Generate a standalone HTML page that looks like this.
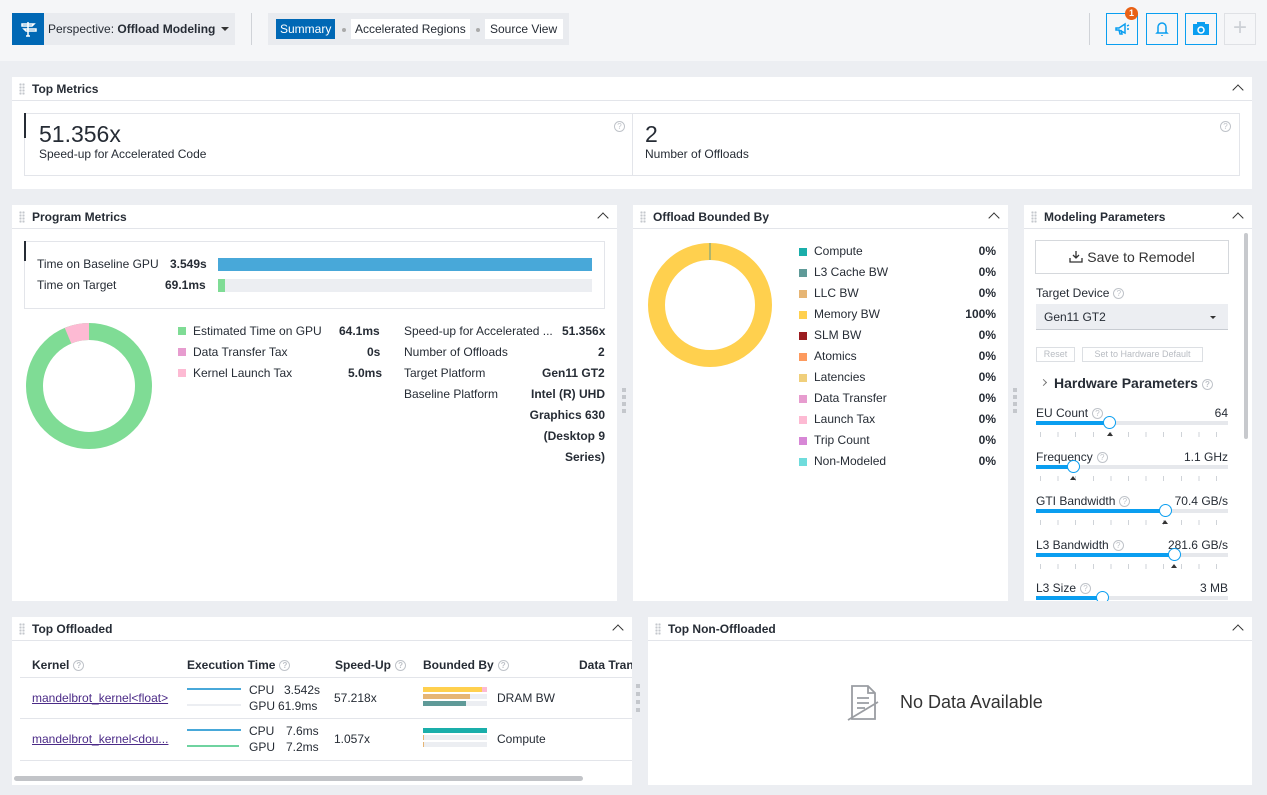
<!DOCTYPE html>
<html><head><meta charset="utf-8"><style>
*{box-sizing:border-box;margin:0;padding:0}
body{width:1267px;height:795px;background:#eceef2;font-family:"Liberation Sans",sans-serif;font-size:12px;color:#262c35;position:relative;overflow:hidden}
.a{position:absolute;white-space:nowrap}
.hdr{left:0;top:0;width:1267px;height:61px;background:#f5f6f8}
.panel{position:absolute;background:#fff}
.ph{position:absolute;left:0;right:0;top:0;height:24px;border-bottom:1px solid #e3e5ea}
.ph .t{position:absolute;left:20px;top:5px;font-weight:bold;font-size:12px;color:#262c35}
.grip{position:absolute;left:7px;top:6px;width:6px;height:12px;background:radial-gradient(circle,#c4c7cc 1px,transparent 1.3px) 0 0/3px 3px}
.chev{position:absolute;right:10px;top:9px;width:8px;height:8px;border-left:1.5px solid #333;border-top:1.5px solid #333;transform:rotate(45deg)}
.q{display:inline-block;width:11px;height:11px;border:1px solid #bfc3c9;border-radius:50%;color:#bfc3c9;font-size:8px;line-height:9px;text-align:center;vertical-align:middle;margin-left:4px}
.sq{position:absolute;width:8px;height:8px}
.r{text-align:right}
.b{font-weight:bold}
.slider{position:absolute;left:12px;width:192px;height:4px;background:#e6e8ec}
.slider i{position:absolute;left:0;top:0;height:4px;background:#0a9ef0}
.slider b{position:absolute;top:-5px;width:13px;height:13px;border:1.5px solid #0a9ef0;border-radius:50%;background:#fff}
.ticks{position:absolute;left:16px;width:188px;height:5px;background:repeating-linear-gradient(90deg,#cfd3d8 0 1px,transparent 1px 17.6px)}
</style></head><body>
<div class="a hdr"></div>
<div class="a" style="left:12px;top:13px;width:32px;height:32px;background:#0068b5"></div>
<svg class="a" style="left:19px;top:20px" width="18" height="18" viewBox="0 0 18 18" fill="none" stroke="#fff" stroke-width="1.5"><path d="M3 4h12l-2 2H3zM5 9h12v2H7zM9 2v14M7 16h4"/></svg>
<div class="a" style="left:44px;top:13px;width:191px;height:32px;background:#e9ebef"></div>
<div class="a" style="left:48px;top:22px;font-size:12px">Perspective: <b>Offload Modeling</b></div>
<div class="a" style="left:221px;top:27px;border:4px solid transparent;border-top:4px solid #333"></div>
<div class="a" style="left:251px;top:13px;width:1px;height:32px;background:#d0d3d8"></div>
<div class="a" style="left:268px;top:13px;width:301px;height:32px;background:#e9ebef"></div>
<div class="a" style="left:276px;top:19px;width:59px;height:20px;background:#0068b5;color:#fff;padding:3px 4px">Summary</div>
<div class="a" style="left:342px;top:28px;width:4px;height:4px;border-radius:50%;background:#aaa"></div>
<div class="a" style="left:351px;top:19px;width:119px;height:20px;background:#fff;padding:3px 4px">Accelerated Regions</div>
<div class="a" style="left:476px;top:28px;width:4px;height:4px;border-radius:50%;background:#aaa"></div>
<div class="a" style="left:485px;top:19px;width:78px;height:20px;background:#fff;padding:3px 5px">Source View</div>
<div class="a" style="left:1089px;top:13px;width:1px;height:32px;background:#d0d3d8"></div>
<div class="a" style="left:1106px;top:13px;width:32px;height:32px;border:1.5px solid #0a9ef0"></div>
<svg class="a" style="left:1114px;top:21px" width="16" height="16" viewBox="0 0 16 16" fill="none" stroke="#0a9ef0" stroke-width="1.5"><path d="M2 7h3l6-4v9L5 9H2zM5 9l1 4h2l-1-4M13 5l2-1M13 8h2"/></svg>
<div class="a" style="left:1125px;top:7px;width:13px;height:13px;border-radius:50%;background:#e96115;color:#fff;font-size:9px;text-align:center;line-height:13px;font-weight:bold">1</div>
<div class="a" style="left:1146px;top:13px;width:32px;height:32px;border:1.5px solid #0a9ef0"></div>
<svg class="a" style="left:1154px;top:20px" width="16" height="18" viewBox="0 0 16 18" fill="none" stroke="#0a9ef0" stroke-width="1.5"><path d="M4 12V7a4 4 0 0 1 8 0v5l1 1H3zM8 15v1"/></svg>
<div class="a" style="left:1185px;top:13px;width:32px;height:32px;border:1.5px solid #0a9ef0"></div>
<svg class="a" style="left:1192px;top:21px" width="18" height="16" viewBox="0 0 18 16"><rect x="1" y="3" width="16" height="11" fill="#0a9ef0"/><rect x="5" y="1" width="8" height="2" fill="#0a9ef0"/><circle cx="9" cy="9" r="3" fill="none" stroke="#fff" stroke-width="1.5"/></svg>
<div class="a" style="left:1224px;top:13px;width:32px;height:32px;border:1.5px solid #dfe1e5;color:#ccd0d5;font-size:24px;text-align:center;line-height:28px">+</div>

<!-- Top Metrics -->
<div class="panel" style="left:12px;top:77px;width:1240px;height:112px">
 <div class="ph"><div class="grip"></div><div class="t">Top Metrics</div><div class="chev"></div></div>
 <div class="a" style="left:12px;top:36px;width:1216px;height:63px;border:1px solid #e3e5ea"></div>
 <div class="a" style="left:620px;top:36px;width:1px;height:63px;background:#e3e5ea"></div>
 <div class="a" style="left:12px;top:36px;width:2px;height:25px;background:#262c35"></div>
 <div class="a" style="left:27px;top:44px;font-size:23px">51.356x</div>
 <div class="a" style="left:27px;top:70px">Speed-up for Accelerated Code</div>
 <div class="a" style="left:602px;top:42px"><span class="q" style="margin:0">?</span></div>
 <div class="a" style="left:633px;top:44px;font-size:23px">2</div>
 <div class="a" style="left:633px;top:70px">Number of Offloads</div>
 <div class="a" style="left:1208px;top:42px"><span class="q" style="margin:0">?</span></div>
</div>

<!-- Program Metrics -->
<div class="panel" style="left:12px;top:205px;width:605px;height:396px">
 <div class="ph"><div class="grip"></div><div class="t">Program Metrics</div><div class="chev"></div></div>
 <div class="a" style="left:12px;top:36px;width:581px;height:68px;border:1px solid #e3e5ea"></div>
 <div class="a" style="left:12px;top:36px;width:2px;height:20px;background:#262c35"></div>
 <div class="a" style="left:25px;top:52px">Time on Baseline GPU</div>
 <div class="a b" style="left:158px;top:52px">3.549s</div>
 <div class="a" style="left:206px;top:53px;width:374px;height:13px;background:#48a8d9"></div>
 <div class="a" style="left:25px;top:73px">Time on Target</div>
 <div class="a b" style="left:153px;top:73px">69.1ms</div>
 <div class="a" style="left:206px;top:74px;width:374px;height:13px;background:#eceef2"></div>
 <div class="a" style="left:206px;top:74px;width:7px;height:13px;background:#7fdc95"></div>
 <svg class="a" style="left:14px;top:118px" width="126" height="126" viewBox="0 0 126 126"><circle cx="63" cy="63" r="54.5" fill="none" stroke="#7fdc95" stroke-width="17"/><path d="M63 8.5 A54.5 54.5 0 0 0 42 12.7" fill="none" stroke="#fdbad3" stroke-width="17"/></svg>
 <div class="sq" style="left:166px;top:122px;background:#7fdc95"></div><div class="a" style="left:181px;top:119px">Estimated Time on GPU</div><div class="a b" style="left:327px;top:119px">64.1ms</div>
 <div class="sq" style="left:166px;top:143px;background:#e79ccf"></div><div class="a" style="left:181px;top:140px">Data Transfer Tax</div><div class="a b" style="left:355px;top:140px">0s</div>
 <div class="sq" style="left:166px;top:164px;background:#fdbad3"></div><div class="a" style="left:181px;top:161px">Kernel Launch Tax</div><div class="a b" style="left:336px;top:161px">5.0ms</div>
 <div class="a" style="left:392px;top:119px">Speed-up for Accelerated ...</div><div class="a b" style="left:550px;top:119px">51.356x</div>
 <div class="a" style="left:392px;top:140px">Number of Offloads</div><div class="a b" style="left:586px;top:140px">2</div>
 <div class="a" style="left:392px;top:161px">Target Platform</div><div class="a b" style="left:530px;top:161px">Gen11 GT2</div>
 <div class="a" style="left:392px;top:182px">Baseline Platform</div>
 <div class="a b r" style="left:480px;top:179px;width:113px;line-height:21px">Intel (R) UHD<br>Graphics 630<br>(Desktop 9<br>Series)</div>
</div>
<div class="a" style="left:622px;top:388px;width:4px;height:28px;background:repeating-linear-gradient(#c4c7cc 0 4px,transparent 4px 7px)"></div>

<!-- Offload Bounded By -->
<div class="panel" style="left:633px;top:205px;width:375px;height:396px">
 <div class="ph"><div class="grip"></div><div class="t">Offload Bounded By</div><div class="chev"></div></div>
 <svg class="a" style="left:15px;top:38px" width="124" height="124" viewBox="0 0 124 124"><circle cx="62" cy="62" r="53.5" fill="none" stroke="#ffd04e" stroke-width="17"/><line x1="62" y1="0" x2="62" y2="17" stroke="#5f9a8e" stroke-width="1"/></svg>
 <div style="position:absolute;left:166px;top:39px;width:197px">
  <div style="position:relative;height:21px"><div class="sq" style="left:0;top:4px;background:#1aaeaa"></div><span style="position:absolute;left:15px">Compute</span><span class="b" style="position:absolute;right:0">0%</span></div>
  <div style="position:relative;height:21px"><div class="sq" style="left:0;top:4px;background:#5f9a98"></div><span style="position:absolute;left:15px">L3 Cache BW</span><span class="b" style="position:absolute;right:0">0%</span></div>
  <div style="position:relative;height:21px"><div class="sq" style="left:0;top:4px;background:#e6b574"></div><span style="position:absolute;left:15px">LLC BW</span><span class="b" style="position:absolute;right:0">0%</span></div>
  <div style="position:relative;height:21px"><div class="sq" style="left:0;top:4px;background:#ffd04e"></div><span style="position:absolute;left:15px">Memory BW</span><span class="b" style="position:absolute;right:0">100%</span></div>
  <div style="position:relative;height:21px"><div class="sq" style="left:0;top:4px;background:#9b1c20"></div><span style="position:absolute;left:15px">SLM BW</span><span class="b" style="position:absolute;right:0">0%</span></div>
  <div style="position:relative;height:21px"><div class="sq" style="left:0;top:4px;background:#fd9a5e"></div><span style="position:absolute;left:15px">Atomics</span><span class="b" style="position:absolute;right:0">0%</span></div>
  <div style="position:relative;height:21px"><div class="sq" style="left:0;top:4px;background:#f0cf7b"></div><span style="position:absolute;left:15px">Latencies</span><span class="b" style="position:absolute;right:0">0%</span></div>
  <div style="position:relative;height:21px"><div class="sq" style="left:0;top:4px;background:#e79ccf"></div><span style="position:absolute;left:15px">Data Transfer</span><span class="b" style="position:absolute;right:0">0%</span></div>
  <div style="position:relative;height:21px"><div class="sq" style="left:0;top:4px;background:#fdbad3"></div><span style="position:absolute;left:15px">Launch Tax</span><span class="b" style="position:absolute;right:0">0%</span></div>
  <div style="position:relative;height:21px"><div class="sq" style="left:0;top:4px;background:#d787d6"></div><span style="position:absolute;left:15px">Trip Count</span><span class="b" style="position:absolute;right:0">0%</span></div>
  <div style="position:relative;height:21px"><div class="sq" style="left:0;top:4px;background:#6fdcdc"></div><span style="position:absolute;left:15px">Non-Modeled</span><span class="b" style="position:absolute;right:0">0%</span></div>
 </div>
</div>
<div class="a" style="left:1013px;top:388px;width:4px;height:28px;background:repeating-linear-gradient(#c4c7cc 0 4px,transparent 4px 7px)"></div>

<!-- Modeling Parameters -->
<div class="panel" style="left:1024px;top:205px;width:228px;height:396px;overflow:hidden">
 <div class="ph"><div class="grip"></div><div class="t">Modeling Parameters</div><div class="chev"></div></div>
 <div class="a" style="left:220px;top:28px;width:4px;height:206px;background:#c7c9cd;border-radius:2px"></div>
 <div class="a" style="left:11px;top:35px;width:194px;height:34px;border:1px solid #d5d8dc;text-align:center;font-size:14px;line-height:32px;color:#333"><svg width="14" height="13" viewBox="0 0 14 13" style="vertical-align:-1px;margin-right:4px" fill="none" stroke="#333" stroke-width="1.3"><path d="M7 1v7M4 5l3 3 3-3M1 8v4h12V8"/></svg>Save to Remodel</div>
 <div class="a" style="left:12px;top:81px">Target Device<span class="q">?</span></div>
 <div class="a" style="left:12px;top:99px;width:192px;height:26px;background:#eceef2;border-bottom:1px solid #c8ccd2;padding:6px 8px">Gen11 GT2</div>
 <div class="a" style="left:186px;top:111px;border:3px solid transparent;border-top:3px solid #333"></div>
 <div class="a" style="left:12px;top:142px;width:39px;height:15px;border:1px solid #dcdfe3;color:#b8bcc2;font-size:9px;text-align:center;line-height:13px">Reset</div>
 <div class="a" style="left:58px;top:142px;width:121px;height:15px;border:1px solid #dcdfe3;color:#b8bcc2;font-size:9px;text-align:center;line-height:13px">Set to Hardware Default</div>
 <div class="a" style="left:17px;top:175px;width:5px;height:5px;border-right:1.2px solid #777;border-top:1.2px solid #777;transform:rotate(45deg)"></div>
 <div class="a b" style="left:30px;top:170px;font-size:14px">Hardware Parameters<span class="q">?</span></div>
 <div class="a" style="left:12px;top:201px">EU Count<span class="q">?</span></div><div class="a" style="right:24px;top:201px">64</div>
 <div class="slider" style="top:216px"><i style="width:74px"></i><b style="left:67px"></b></div>
 <div class="ticks" style="top:227px"></div><div class="a" style="left:83px;top:227px;border:3px solid transparent;border-bottom:4px solid #333;border-top:0"></div>
 <div class="a" style="left:12px;top:245px">Frequency<span class="q">?</span></div><div class="a" style="right:24px;top:245px">1.1 GHz</div>
 <div class="slider" style="top:260px"><i style="width:37px"></i><b style="left:31px"></b></div>
 <div class="ticks" style="top:271px"></div><div class="a" style="left:46px;top:271px;border:3px solid transparent;border-bottom:4px solid #333;border-top:0"></div>
 <div class="a" style="left:12px;top:289px">GTI Bandwidth<span class="q">?</span></div><div class="a" style="right:24px;top:289px">70.4 GB/s</div>
 <div class="slider" style="top:304px"><i style="width:130px"></i><b style="left:123px"></b></div>
 <div class="ticks" style="top:315px"></div><div class="a" style="left:138px;top:315px;border:3px solid transparent;border-bottom:4px solid #333;border-top:0"></div>
 <div class="a" style="left:12px;top:333px">L3 Bandwidth<span class="q">?</span></div><div class="a" style="right:24px;top:333px">281.6 GB/s</div>
 <div class="slider" style="top:348px"><i style="width:139px"></i><b style="left:132px"></b></div>
 <div class="ticks" style="top:359px"></div><div class="a" style="left:147px;top:359px;border:3px solid transparent;border-bottom:4px solid #333;border-top:0"></div>
 <div class="a" style="left:12px;top:376px">L3 Size<span class="q">?</span></div><div class="a" style="right:24px;top:376px">3 MB</div>
 <div class="slider" style="top:391px"><i style="width:66px"></i><b style="left:60px"></b></div>
</div>

<!-- Top Offloaded -->
<div class="panel" style="left:12px;top:617px;width:620px;height:168px;overflow:hidden">
 <div class="ph"><div class="grip"></div><div class="t">Top Offloaded</div><div class="chev"></div></div>
 <div class="a b" style="left:20px;top:41px">Kernel<span class="q">?</span></div>
 <div class="a b" style="left:175px;top:41px">Execution Time<span class="q">?</span></div>
 <div class="a b" style="left:323px;top:41px">Speed-Up<span class="q">?</span></div>
 <div class="a b" style="left:411px;top:41px">Bounded By<span class="q">?</span></div>
 <div class="a b" style="left:567px;top:41px">Data Transfer</div>
 <div class="a" style="left:8px;top:60px;width:620px;height:1px;background:#e3e5ea"></div>
 <div class="a" style="left:8px;top:101px;width:620px;height:1px;background:#e3e5ea"></div>
 <div class="a" style="left:8px;top:143px;width:620px;height:1px;background:#e3e5ea"></div>
 <div class="a" style="left:20px;top:74px;color:#4b2a87;text-decoration:underline">mandelbrot_kernel&lt;float&gt;</div>
 <div class="a" style="left:175px;top:71px;width:54px;height:2px;background:#48a8d9"></div>
 <div class="a" style="left:175px;top:87px;width:54px;height:2px;background:#eceef2"></div>
 <div class="a" style="left:237px;top:66px">CPU</div><div class="a" style="left:272px;top:66px">3.542s</div>
 <div class="a" style="left:237px;top:82px">GPU</div><div class="a" style="left:266px;top:82px">61.9ms</div>
 <div class="a" style="left:322px;top:74px">57.218x</div>
 <div class="a" style="left:411px;top:70px;width:64px;height:5px;background:#eceef2"></div><div class="a" style="left:411px;top:70px;width:59px;height:5px;background:#ffd04e"></div><div class="a" style="left:470px;top:70px;width:5px;height:5px;background:#fdbad3"></div>
 <div class="a" style="left:411px;top:77px;width:64px;height:5px;background:#eceef2"></div><div class="a" style="left:411px;top:77px;width:47px;height:5px;background:#e6b574"></div>
 <div class="a" style="left:411px;top:84px;width:64px;height:5px;background:#eceef2"></div><div class="a" style="left:411px;top:84px;width:43px;height:5px;background:#5f9a98"></div>
 <div class="a" style="left:485px;top:74px">DRAM BW</div>
 <div class="a" style="left:20px;top:115px;color:#4b2a87;text-decoration:underline">mandelbrot_kernel&lt;dou...</div>
 <div class="a" style="left:175px;top:112px;width:54px;height:2px;background:#48a8d9"></div>
 <div class="a" style="left:175px;top:128px;width:52px;height:2px;background:#6fd3a0"></div>
 <div class="a" style="left:237px;top:107px">CPU</div><div class="a" style="left:274px;top:107px">7.6ms</div>
 <div class="a" style="left:237px;top:123px">GPU</div><div class="a" style="left:274px;top:123px">7.2ms</div>
 <div class="a" style="left:322px;top:115px">1.057x</div>
 <div class="a" style="left:411px;top:111px;width:64px;height:5px;background:#1aaeaa"></div>
 <div class="a" style="left:411px;top:118px;width:64px;height:5px;background:#eceef2"></div><div class="a" style="left:411px;top:118px;width:1px;height:5px;background:#e6b574"></div>
 <div class="a" style="left:411px;top:125px;width:64px;height:5px;background:#eceef2"></div><div class="a" style="left:411px;top:125px;width:1px;height:5px;background:#e6b574"></div>
 <div class="a" style="left:485px;top:115px">Compute</div>
 <div class="a" style="left:2px;top:159px;width:569px;height:5px;background:#c2c4c8;border-radius:3px"></div>
</div>
<div class="a" style="left:636px;top:684px;width:4px;height:30px;background:repeating-linear-gradient(#c4c7cc 0 4px,transparent 4px 8px)"></div>

<!-- Top Non-Offloaded -->
<div class="panel" style="left:648px;top:617px;width:604px;height:168px">
 <div class="ph"><div class="grip"></div><div class="t">Top Non-Offloaded</div><div class="chev"></div></div>
 <svg class="a" style="left:198px;top:67px" width="36" height="38" viewBox="0 0 36 38" fill="none" stroke="#9a9da2" stroke-width="1.8"><path d="M6 2h16l7 7v26H6zM22 2v7h7M11 14h12M11 19h12M11 24h8M2 36L32 18"/></svg>
 <div class="a" style="left:252px;top:75px;font-size:18px;color:#333">No Data Available</div>
</div>
</body></html>
